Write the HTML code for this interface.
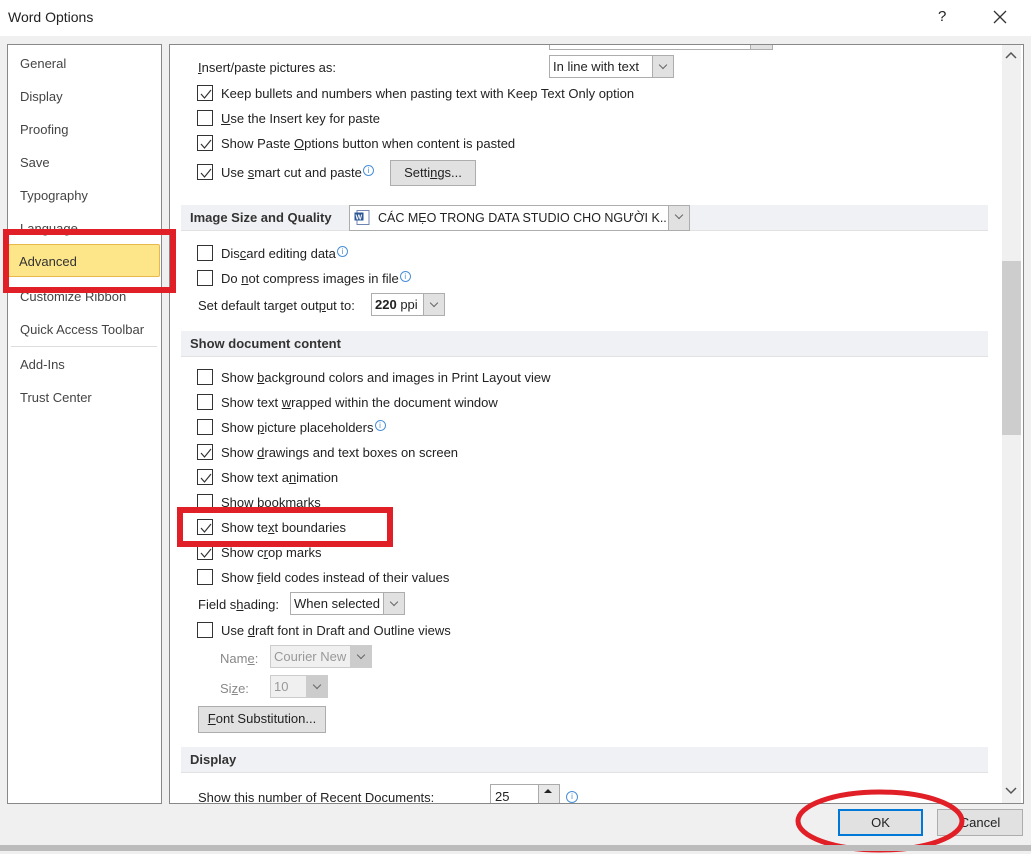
<!DOCTYPE html>
<html><head><meta charset="utf-8"><style>
*{margin:0;padding:0;box-sizing:border-box}
body{width:1031px;height:851px;position:relative;overflow:hidden;background:#f0f0f0;font-family:"Liberation Sans","Noto Sans CJK SC",sans-serif;font-size:13px;color:#222}
.a{position:absolute;white-space:nowrap;line-height:16px}
.cb{position:absolute;width:16px;height:16px;border:1px solid #333;background:#fff;left:197px}
.cb svg{position:absolute;left:1px;top:1px}
.sec{position:absolute;left:181px;width:807px;height:26px;background:#f0f1f4;border-bottom:1px solid #e2e2e2;font-weight:bold;font-size:13px;line-height:26px;padding-left:9px;color:#333}
.dd{position:absolute;background:#fff;border:1px solid #adadad;height:23px;line-height:21px;padding-left:3px;white-space:nowrap;overflow:hidden}
.dd .ar{position:absolute;right:0;top:0;width:21px;height:21px;background:#e1e1e1;border-left:1px solid #adadad}
.dd .ar:after{content:"";position:absolute;left:7px;top:6px;width:5px;height:5px;border-right:1px solid #666;border-bottom:1px solid #666;transform:rotate(45deg)}
.btn{position:absolute;background:#e1e1e1;border:1px solid #adadad;text-align:center;line-height:24px}
.nav{position:absolute;left:20px;color:#444;line-height:16px}
u{text-decoration:underline}
.i{display:inline-block;width:11px;height:11px;border:1px solid #4a8fd6;border-radius:50%;font-size:8px;line-height:9px;text-align:center;color:#4a8fd6;vertical-align:top;margin-left:1px}
</style></head><body>
<div style="position:absolute;left:0;top:0;width:1031px;height:36px;background:#fff"></div>
<div class="a" style="left:8px;top:9px;font-size:14px;color:#222">Word Options</div>
<div class="a" style="left:938px;top:9px;font-size:15px">?</div>
<svg class="a" style="left:993px;top:10px" width="14" height="14"><path d="M1 1L13 13M13 1L1 13" stroke="#333" stroke-width="1.3"/></svg>

<!-- left nav -->
<div style="position:absolute;left:7px;top:44px;width:155px;height:760px;background:#fff;border:1px solid #888"></div>
<div class="nav" style="top:56px">General</div>
<div class="nav" style="top:89px">Display</div>
<div class="nav" style="top:122px">Proofing</div>
<div class="nav" style="top:155px">Save</div>
<div class="nav" style="top:188px">Typography</div>
<div class="nav" style="top:221px">Language</div>
<div style="position:absolute;left:8px;top:244px;width:152px;height:33px;background:#fde68a;border:1px solid #e8b84a;border-radius:2px"></div>
<div class="nav" style="top:254px;left:19px;color:#333">Advanced</div>
<div class="nav" style="top:289px">Customize Ribbon</div>
<div class="nav" style="top:322px">Quick Access Toolbar</div>
<div style="position:absolute;left:11px;top:346px;width:146px;height:1px;background:#ddd"></div>
<div class="nav" style="top:357px">Add-Ins</div>
<div class="nav" style="top:390px">Trust Center</div>

<!-- content panel -->
<div style="position:absolute;left:169px;top:44px;width:855px;height:760px;background:#fff;border:1px solid #888"></div>
<div style="position:absolute;left:3px;top:229px;width:173px;height:64px;border:6px solid #e01f26"></div>
<div style="position:absolute;left:1002px;top:45px;width:19px;height:758px;background:#f0f0f0"></div>
<div style="position:absolute;left:1002px;top:261px;width:19px;height:174px;background:#cdcdcd"></div>
<svg class="a" style="left:1005px;top:52px" width="12" height="8"><path d="M1 6L6 1L11 6" stroke="#555" stroke-width="1.5" fill="none"/></svg>
<svg class="a" style="left:1005px;top:787px" width="12" height="8"><path d="M1 1L6 6L11 1" stroke="#555" stroke-width="1.5" fill="none"/></svg>

<div style="position:absolute;left:549px;top:45px;width:224px;height:5px;border:1px solid #adadad;border-top:none;background:#fff"></div>
<div style="position:absolute;left:750px;top:45px;width:23px;height:5px;background:#e1e1e1;border:1px solid #adadad;border-top:none"></div>

<div class="a" style="left:198px;top:60px"><u>I</u>nsert/paste pictures as:</div>
<div class="dd" style="left:549px;top:55px;width:125px">In line with text<div class="ar"></div></div>

<div class="cb" style="top:85px"><svg width="14" height="14"><path d="M2 7L5.5 11L12 3" stroke="#333" stroke-width="1.2" fill="none"/></svg></div>
<div class="a" style="left:221px;top:86px">Keep bullets and numbers when pasting text with Keep Text Only option</div>
<div class="cb" style="top:110px"></div>
<div class="a" style="left:221px;top:111px"><u>U</u>se the Insert key for paste</div>
<div class="cb" style="top:135px"><svg width="14" height="14"><path d="M2 7L5.5 11L12 3" stroke="#333" stroke-width="1.2" fill="none"/></svg></div>
<div class="a" style="left:221px;top:136px">Show Paste <u>O</u>ptions button when content is pasted</div>
<div class="cb" style="top:164px"><svg width="14" height="14"><path d="M2 7L5.5 11L12 3" stroke="#333" stroke-width="1.2" fill="none"/></svg></div>
<div class="a" style="left:221px;top:165px">Use <u>s</u>mart cut and paste<span class="i">i</span></div>
<div class="btn" style="left:390px;top:160px;width:86px;height:26px">Setti<u>n</u>gs...</div>

<div class="sec" style="top:205px">Image Size and Quality</div>
<div class="dd" style="left:349px;top:205px;width:341px;height:26px;line-height:24px;padding-left:28px;font-size:12.5px"><span style="display:inline-block;width:288px;overflow:hidden">CÁC MẸO TRONG DATA STUDIO CHO NGƯỜI K...</span><div class="ar" style="height:24px"></div>
<svg style="position:absolute;left:4px;top:4px" width="16" height="15"><rect x="3" y="0.5" width="12" height="14" fill="#fff" stroke="#6f86b5"/><rect x="0.5" y="2.5" width="9" height="8" fill="#2b5797"/><text x="1.5" y="9.5" font-size="7" fill="#fff" font-family="Liberation Sans" font-weight="bold">W</text></svg></div>

<div class="cb" style="top:245px"></div>
<div class="a" style="left:221px;top:246px">Dis<u>c</u>ard editing data<span class="i">i</span></div>
<div class="cb" style="top:270px"></div>
<div class="a" style="left:221px;top:271px">Do <u>n</u>ot compress images in file<span class="i">i</span></div>
<div class="a" style="left:198px;top:298px">Set default target out<u>p</u>ut to:</div>
<div class="dd" style="left:371px;top:293px;width:74px"><b>220</b> ppi<div class="ar"></div></div>

<div class="sec" style="top:331px">Show document content</div>
<div class="cb" style="top:369px"></div>
<div class="a" style="left:221px;top:370px">Show <u>b</u>ackground colors and images in Print Layout view</div>
<div class="cb" style="top:394px"></div>
<div class="a" style="left:221px;top:395px">Show text <u>w</u>rapped within the document window</div>
<div class="cb" style="top:419px"></div>
<div class="a" style="left:221px;top:420px">Show <u>p</u>icture placeholders<span class="i">i</span></div>
<div class="cb" style="top:444px"><svg width="14" height="14"><path d="M2 7L5.5 11L12 3" stroke="#333" stroke-width="1.2" fill="none"/></svg></div>
<div class="a" style="left:221px;top:445px">Show <u>d</u>rawings and text boxes on screen</div>
<div class="cb" style="top:469px"><svg width="14" height="14"><path d="M2 7L5.5 11L12 3" stroke="#333" stroke-width="1.2" fill="none"/></svg></div>
<div class="a" style="left:221px;top:470px">Show text a<u>n</u>imation</div>
<div class="cb" style="top:494px"></div>
<div class="a" style="left:221px;top:495px">Show bookmarks</div>
<div class="cb" style="top:519px"><svg width="14" height="14"><path d="M2 7L5.5 11L12 3" stroke="#333" stroke-width="1.2" fill="none"/></svg></div>
<div class="a" style="left:221px;top:520px">Show te<u>x</u>t boundaries</div>
<div class="cb" style="top:544px"><svg width="14" height="14"><path d="M2 7L5.5 11L12 3" stroke="#333" stroke-width="1.2" fill="none"/></svg></div>
<div class="a" style="left:221px;top:545px">Show c<u>r</u>op marks</div>
<div class="cb" style="top:569px"></div>
<div class="a" style="left:221px;top:570px">Show <u>f</u>ield codes instead of their values</div>
<div style="position:absolute;left:177px;top:507px;width:216px;height:40px;border:6px solid #e01f26"></div>

<div class="a" style="left:198px;top:597px">Field s<u>h</u>ading:</div>
<div class="dd" style="left:290px;top:592px;width:115px">When selected<div class="ar"></div></div>
<div class="cb" style="top:622px"></div>
<div class="a" style="left:221px;top:623px">Use <u>d</u>raft font in Draft and Outline views</div>
<div class="a" style="left:220px;top:651px;color:#888">Nam<u>e</u>:</div>
<div class="dd" style="left:270px;top:645px;width:102px;background:#f0f0f0;border-color:#ccc;color:#999">Courier New<div class="ar" style="background:#ccc;border-color:#ccc"></div></div>
<div class="a" style="left:220px;top:681px;color:#888">Si<u>z</u>e:</div>
<div class="dd" style="left:270px;top:675px;width:58px;background:#f0f0f0;border-color:#ccc;color:#999">10<div class="ar" style="background:#ccc;border-color:#ccc"></div></div>
<div class="btn" style="left:198px;top:706px;width:128px;height:27px"><u>F</u>ont Substitution...</div>

<div class="sec" style="top:747px">Display</div>
<div class="a" style="left:198px;top:790px">Show this number of Recent Documents:</div>
<div style="position:absolute;left:490px;top:784px;width:70px;height:20px;background:#fff;border:1px solid #aaa;padding-left:4px;line-height:24px">25</div>
<div style="position:absolute;left:538px;top:785px;width:21px;height:18px;background:#e8e8e8;border-left:1px solid #aaa"></div>
<svg class="a" style="left:543px;top:788px" width="10" height="6"><path d="M1 5L5 1L9 5Z" fill="#222"/></svg>
<span class="i a" style="left:565px;top:791px;width:12px;height:12px">i</span>

<div style="position:absolute;left:169px;top:803px;width:855px;height:1px;background:#888"></div>
<div style="position:absolute;left:169px;top:804px;width:862px;height:40px;background:#f0f0f0"></div>

<div class="btn" style="left:838px;top:809px;width:85px;height:27px;border:2px solid #0078d7;line-height:23px">OK</div>
<div class="btn" style="left:937px;top:809px;width:86px;height:27px;line-height:25px">Cancel</div>
<svg class="a" style="left:790px;top:786px" width="180" height="68"><ellipse cx="90" cy="35" rx="82" ry="29" fill="none" stroke="#e01f26" stroke-width="5"/></svg>

<div style="position:absolute;left:0;top:845px;width:1031px;height:6px;background:#bcbcbc"></div>
</body></html>
